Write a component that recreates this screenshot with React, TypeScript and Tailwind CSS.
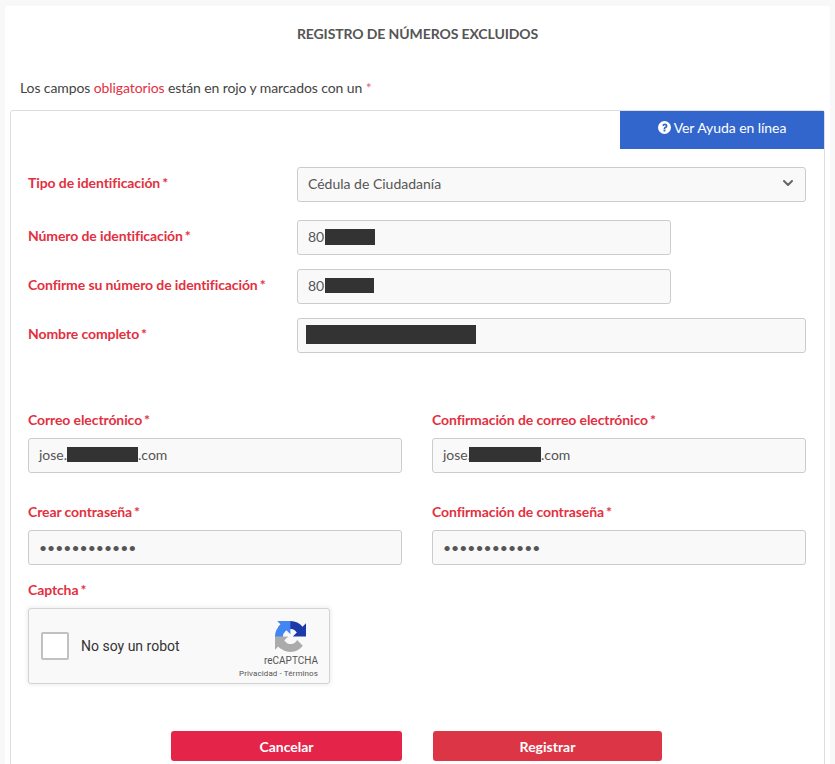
import { ChevronDown } from 'lucide-react'
import type { ReactNode } from 'react'

const FieldLabel = ({ children }: { children: ReactNode }) => (
	<label className="block text-[14px] leading-[20px] font-bold tracking-[-0.1px] text-[#e3303f]">
		{children}
		<span className="ml-[2px]">*</span>
	</label>
)

const Redacted = ({ width, height = 'h-[16px]' }: { width: string; height?: string }) => (
	<span className={`inline-block bg-[#333333] ${width} ${height}`} />
)

const Field = ({ children, className }: { children: ReactNode; className: string }) => (
	<div
		className={`flex h-[35px] items-center rounded-[3px] border border-[#cccccc] bg-[#f9f9f9] px-[10px] pb-[2px] text-[14px] text-[#555555] ${className}`}
	>
		{children}
	</div>
)

const PasswordField = () => (
	<input
		type="password"
		readOnly
		defaultValue="123456789012"
		className="h-[35px] w-full rounded-[3px] border border-[#cccccc] bg-[#f9f9f9] px-[10px] font-['Lato'] text-[14px] text-[#555555] outline-none"
	/>
)

const RecaptchaLogo = () => (
	<svg viewBox="0 0 64 64" className="mr-[12px] h-[31px] w-[31px]" aria-hidden="true">
		<path
			d="M64 31.955l-.033-1.37V4.687l-7.16 7.16C50.948 4.674 42.033.093 32.05.093c-10.4 0-19.622 4.96-25.458 12.64l11.736 11.86a15.55 15.55 0 0 1 4.754-5.334c2.05-1.6 4.952-2.906 8.968-2.906.485 0 .86.057 1.135.163 4.976.393 9.288 3.16 11.828 7.172l-8.307 8.307c10.52-.04 22.4-.067 26.295.002"
			fill="#1c3aa9"
		/>
		<path
			d="M31.862.094l-1.37.033H4.594l7.16 7.16C4.58 13.147 0 22.06 0 32.046c0 10.4 4.96 19.622 12.64 25.458l11.86-11.736a15.55 15.55 0 0 1-5.334-4.754c-1.6-2.05-2.906-4.952-2.906-8.968 0-.485.057-.86.163-1.135.393-4.976 3.16-9.288 7.172-11.828l8.307 8.307c-.04-10.52-.067-22.4.002-26.295"
			fill="#4285f4"
		/>
		<path
			d="M.001 32.045l.033 1.37v25.898l7.16-7.16c5.86 7.173 14.774 11.754 24.76 11.754 10.4 0 19.622-4.96 25.458-12.64l-11.736-11.86a15.55 15.55 0 0 1-4.754 5.334c-2.05 1.6-4.952 2.906-8.968 2.906-.485 0-.86-.057-1.135-.163-4.976-.393-9.288-3.16-11.828-7.172l8.307-8.307c-10.52.04-22.4.067-26.295-.002"
			fill="#ababab"
		/>
	</svg>
)

export default function App() {
	return (
		<div className="h-[764px] overflow-hidden bg-[#f8f8f8] pt-[6px] pr-[5px] pl-[5px] font-['Lato',sans-serif] text-[14px] text-[#444444]">
			<div className="h-[900px] rounded-[3px] bg-white px-[5px]">
				<h1 className="pt-[19px] text-center text-[14px] leading-[18px] font-bold tracking-[-0.1px] text-[#555555] uppercase">
					Registro de números excluidos
				</h1>
				<p className="mt-[35px] pl-[10px] leading-[20px] tracking-[-0.1px]">
					Los campos <span className="text-[#e3303f]">obligatorios</span> están en rojo y marcados con un{' '}
					<span className="text-[#dc6b74]">*</span>
				</p>

				<div className="mt-[12px] rounded-[3px] border border-[#dddddd] pb-[40px]">
					<div className="flex justify-end">
						<a className="flex h-[38px] w-[204px] items-center justify-center gap-[3px] bg-[#3366cc] pb-[5px] tracking-[-0.05px] text-white">
							<svg viewBox="0 0 24 24" className="h-[13px] w-[13px]" fill="white" aria-hidden="true">
								<path d="M12 0a12 12 0 1 0 0 24 12 12 0 0 0 0-24zm1.7 18.6a.6.6 0 0 1-.6.6h-2.3a.6.6 0 0 1-.6-.6v-2.2c0-.3.3-.6.6-.6h2.3c.3 0 .6.3.6.6zm2.8-6.8c-.8.6-1.9 1.1-2.5 1.8-.3.3-.3.9-.3 1h-3.3c0-1.100.2-2.200 1.100-3 .9-.9 2.700-1.400 2.700-2.500 0-.7-.6-1.200-1.500-1.200-1.100 0-1.800.8-2.200 1.700L8.100 8.100C8.900 6.200 10.300 4.800 12.500 4.800c2.300 0 4.900 1.400 4.900 3.900 0 1.400-.3 2.300-.9 3.100z" />
							</svg>
							Ver Ayuda en línea
						</a>
					</div>

					<div className="pr-[18px] pl-[17px]">
						<div className="mt-[18px] flex items-start">
							<div className="w-[269px] pt-[6px]">
								<FieldLabel>Tipo de identificación</FieldLabel>
							</div>
							<Field className="flex-1 justify-between">
								Cédula de Ciudadanía
								<ChevronDown className="-mt-[2px] -mr-[1px] h-[16px] w-[16px] text-[#666666]" strokeWidth={3} />
							</Field>
						</div>

						<div className="mt-[18px] flex items-start">
							<div className="w-[269px] pt-[6px]">
								<FieldLabel>Número de identificación</FieldLabel>
							</div>
							<Field className="w-[374px]">
								80
								<Redacted width="ml-[1px] w-[50px]" />
							</Field>
						</div>

						<div className="mt-[14px] flex items-start">
							<div className="w-[269px] pt-[6px]">
								<FieldLabel>Confirme su número de identificación</FieldLabel>
							</div>
							<Field className="w-[374px]">
								80
								<Redacted width="ml-[1px] w-[49px]" height="h-[15px]" />
							</Field>
						</div>

						<div className="mt-[14px] flex items-start">
							<div className="w-[269px] pt-[6px]">
								<FieldLabel>Nombre completo</FieldLabel>
							</div>
							<Field className="flex-1 !px-[8px]">
								<Redacted width="w-[170px]" height="h-[19px]" />
							</Field>
						</div>

						<div className="mt-[57px] grid grid-cols-2 gap-x-[30px]">
							<div>
								<FieldLabel>Correo electrónico</FieldLabel>
								<Field className="mt-[8px] w-full">
									jose.
									<Redacted width="w-[71px]" height="h-[15px]" />
									.com
								</Field>
							</div>
							<div>
								<FieldLabel>Confirmación de correo electrónico</FieldLabel>
								<Field className="mt-[8px] w-full">
									jose.
									<Redacted width="-ml-[2px] w-[72px]" height="h-[15px]" />
									.com
								</Field>
							</div>
							<div className="mt-[29px]">
								<FieldLabel>Crear contraseña</FieldLabel>
								<div className="mt-[8px]">
									<PasswordField />
								</div>
							</div>
							<div className="mt-[29px]">
								<FieldLabel>Confirmación de contraseña</FieldLabel>
								<div className="mt-[8px]">
									<PasswordField />
								</div>
							</div>
						</div>

						<div className="mt-[15px]">
							<FieldLabel>Captcha</FieldLabel>
							<div className="mt-[8px] flex h-[76px] w-[302px] items-center rounded-[3px] border border-[#d3d3d3] bg-[#f9f9f9] pr-[11px] pl-[12px] font-['Roboto',sans-serif] shadow-[0_0_4px_1px_rgba(0,0,0,0.08)]">
								<span className="h-[28px] w-[28px] rounded-[2px] border-2 border-[#c1c1c1] bg-white" />
								<span className="ml-[12px] flex-1 text-[14px] text-[#333333]">No soy un robot</span>
								<div className="flex flex-col items-end pt-[8px] text-[#555555]">
									<RecaptchaLogo />
									<span className="mt-[3px] text-[10px] leading-[12px]">reCAPTCHA</span>
									<span className="mt-[1px] text-[8px] leading-[12px] tracking-[0.1px] whitespace-nowrap">Privacidad - Términos</span>
								</div>
							</div>
						</div>

						<div className="mt-[47px] flex pl-[143px]">
							<button className="h-[30px] w-[231px] rounded-[3px] bg-[#e5244a] font-bold text-white">Cancelar</button>
							<button className="ml-[31px] h-[30px] w-[229px] rounded-[3px] bg-[#dc3545] font-bold text-white">Registrar</button>
						</div>
					</div>
				</div>
			</div>
		</div>
	)
}
